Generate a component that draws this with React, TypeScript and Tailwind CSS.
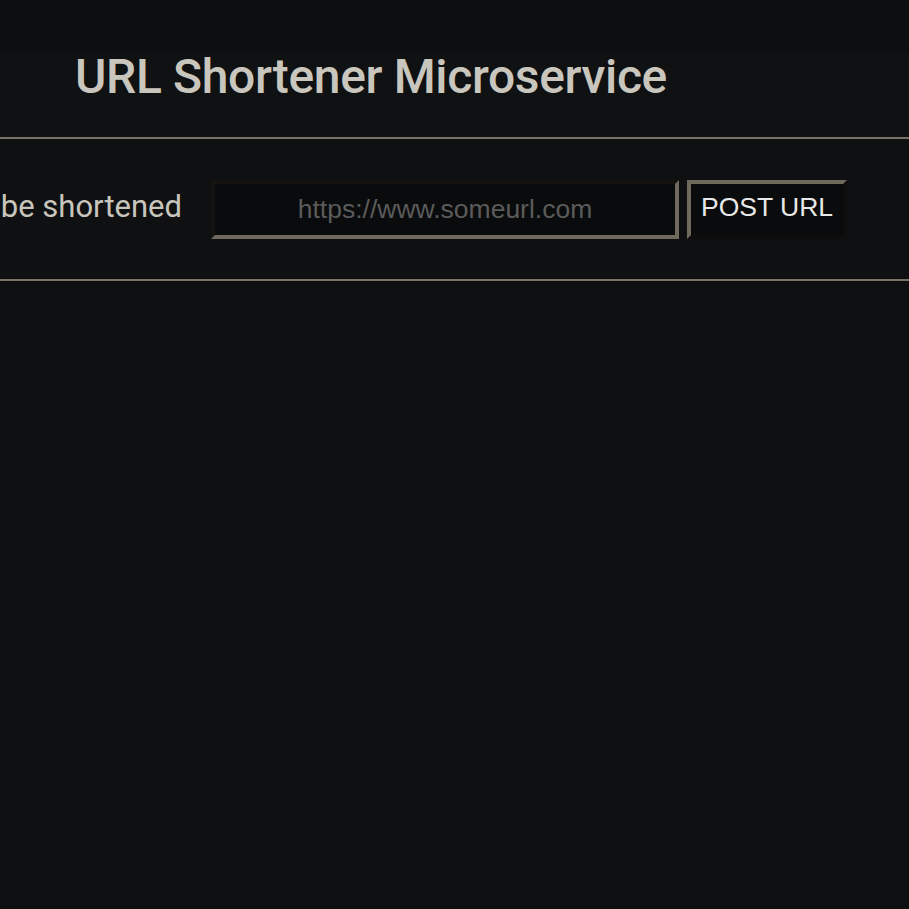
export default function App() {
  return (
    <div className="min-h-screen w-full overflow-hidden bg-[#0d0f11] font-['Roboto',sans-serif]">
      <div className="h-[53px] bg-[#0d0e10]" />
      <header className="h-[86px] bg-[#101113] border-b-2 border-[#7a7264] pl-[75px]">
        <h1 className="pt-px text-[48px] leading-[46px] font-medium text-[#c9c6be] tracking-[-0.35px]">
          URL Shortener Microservice
        </h1>
      </header>
      <section className="h-[142px] bg-[#0f1012] border-b-2 border-[#7a7264] flex items-center justify-end pr-[62px]">
        <form
          className="flex items-center shrink-0"
          onSubmit={(e) => e.preventDefault()}
        >
          <label className="shrink-0 whitespace-nowrap text-[31px] text-[#c8c5bd] font-['Roboto',sans-serif] mr-[29px] -mt-[3px]">
            URL to be shortened
          </label>
          <input
            type="text"
            placeholder="https://www.someurl.com"
            className="w-[468px] h-[59px] bg-[#0a0b0c] border-4 border-solid border-t-[#15130f] border-l-[#15130f] border-b-[#6f6a5c] border-r-[#6f6a5c] text-center text-[26.5px] font-['Liberation_Sans',Arial,sans-serif] text-[#c8c5bd] placeholder:text-[#5b5b5b] outline-none"
          />
          <button
            type="submit"
            className="ml-[8px] w-[160px] h-[59px] bg-[#0a0b0c] border-4 border-solid border-t-[#6f6a5c] border-l-[#6f6a5c] border-b-[#0f0e0c] border-r-[#0f0e0c] text-[26.5px] font-['Liberation_Sans',Arial,sans-serif] text-[#e8e8e8] flex items-center justify-center pb-[3px]"
          >
            POST URL
          </button>
        </form>
      </section>
    </div>
  );
}
